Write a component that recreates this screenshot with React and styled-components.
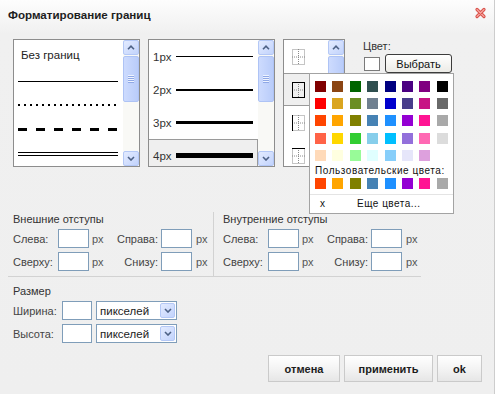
import React from "react"
import styled, { createGlobalStyle } from "styled-components"

const GlobalStyle = createGlobalStyle`
  html, body {
    margin: 0;
    padding: 0;
    background: #fff;
  }
  body {
    font-family: "Liberation Sans", Arial, sans-serif;
    font-size: 11px;
  }
`

const palette = [
  ["#800000", "#8b4513", "#006400", "#2f4f4f", "#000080", "#4b0082", "#800080", "#000000"],
  ["#ff0000", "#daa520", "#6b8e23", "#708090", "#0000cd", "#483d8b", "#c71585", "#696969"],
  ["#ff4500", "#ffa500", "#808000", "#4682b4", "#1e90ff", "#9400d3", "#ff1493", "#a9a9a9"],
  ["#ff6347", "#ffd700", "#32cd32", "#87ceeb", "#00bfff", "#9370db", "#ff69b4", "#dcdcdc"],
  ["#ffdab9", "#ffffe0", "#98fb98", "#e0ffff", "#87cefa", "#e6e6fa", "#dda0dd", "#ffffff"],
]
const customColors = palette[2]

const Dialog = styled.div`
  position: relative;
  width: 495px;
  height: 394px;
  box-sizing: border-box;
  border-right: 1px solid #cdcdcd;
  background: linear-gradient(#fdfdfd 0, #f0f0f0 34px, #efefef 100%);
  color: #3a3a3a;
  display: flex;
  flex-direction: column;
`

const TitleBar = styled.div`
  height: 28px;
  padding: 0 7px 0 8px;
  display: flex;
  align-items: center;
  justify-content: space-between;
`

const Title = styled.div`
  font-weight: bold;
  font-size: 11.6px;
  color: #1e1e1e;
  margin-top: 1px;
`

const CloseButton = styled.div`
  width: 13px;
  height: 12px;
  margin-top: -2px;
  display: flex;
`

const TopRow = styled.div`
  display: flex;
  align-items: flex-start;
  padding: 11px 0 0 13px;
`

const ListBox = styled.div`
  width: ${p => p.$width}px;
  height: 128px;
  box-sizing: border-box;
  border: 1px solid #8d8d8d;
  background: #fff;
  display: flex;
  & + & {
    margin-left: 8px;
  }
`

const ListContent = styled.div`
  flex: 1;
  overflow: hidden;
  display: flex;
  flex-direction: column;
`

const Scrollbar = styled.div`
  width: 16px;
  background: #f9f9f6;
  display: flex;
  flex-direction: column;
`

const ScrollButton = styled.div`
  height: 15px;
  box-sizing: border-box;
  border: 1px solid #b4c8f6;
  border-radius: 2px;
  background: linear-gradient(135deg, #e3ebff, #c2d3fc);
  display: flex;
  align-items: center;
  justify-content: center;
`

const Track = styled.div`
  flex: 1;
`

const Thumb = styled.div`
  margin-top: 1px;
  height: 46px;
  box-sizing: border-box;
  border: 1px solid #aec3f5;
  border-radius: 2px;
  background: linear-gradient(90deg, #cddbfe, #b9ccfa);
  display: flex;
  align-items: center;
  justify-content: center;
`

const Grip = styled.div`
  width: 6px;
  height: 8px;
  background: repeating-linear-gradient(#eef3ff 0 1px, #8fa8e6 1px 2px);
`

const TextItem = styled.div`
  height: 30px;
  padding-left: 7px;
  display: flex;
  align-items: center;
  color: #222;
  font-size: 11.5px;
`

const LineItem = styled.div`
  height: 25px;
  padding: 0 5px 0 4px;
  display: flex;
  align-items: center;
`

const Solid = styled.div`
  flex: 1;
  height: 1px;
  background: #000;
`

const Dotted = styled.div`
  flex: 1;
  height: 2px;
  background: repeating-linear-gradient(90deg, #000 0 2px, transparent 2px 6px);
`

const Dashed = styled.div`
  flex: 1;
  height: 3px;
  background: repeating-linear-gradient(90deg, #000 0 9px, transparent 9px 18px);
`

const Double = styled.div`
  flex: 1;
  height: 4px;
  box-sizing: border-box;
  border-top: 1px solid #000;
  border-bottom: 1px solid #000;
`

const Row = styled.div`
  height: 33px;
  flex-shrink: 0;
  box-sizing: border-box;
  display: flex;
  align-items: center;
  padding-left: ${p => p.$pad}px;
  background: ${p => (p.$selected ? "#efefef" : "transparent")};
  border-top: 1px solid ${p => (p.$selected ? "#9a9a9a" : "transparent")};
  border-bottom: 1px solid ${p => (p.$selected ? "#9a9a9a" : "transparent")};
  border-right: 1px solid ${p => (p.$selected ? "#9a9a9a" : "transparent")};
`

const WidthLabel = styled.span`
  color: #333;
  width: 23px;
  font-size: 11.5px;
`

const WidthLine = styled.div`
  flex: 1;
  margin-right: 4px;
  background: #000;
`

const ColorColumn = styled.div`
  margin-left: 18px;
  padding-top: 1px;
`

const ColorLabel = styled.div`
  color: #333;
  line-height: 13px;
`

const ColorRow = styled.div`
  display: flex;
  align-items: center;
  margin-top: 1px;
`

const ColorSwatch = styled.div`
  width: 16px;
  height: 14px;
  margin-left: 1px;
  box-sizing: border-box;
  border: 1px solid #7a7a7a;
  background: #fff;
`

const PickButton = styled.div`
  margin-left: 5px;
  width: 67px;
  height: 19px;
  box-sizing: border-box;
  border: 1px solid #3c3c3c;
  border-radius: 3px;
  background: linear-gradient(#ffffff, #ecebe6);
  display: flex;
  align-items: center;
  justify-content: center;
  color: #111;
`

const Popup = styled.div`
  position: absolute;
  left: 309px;
  top: 73px;
  width: 145px;
  height: 141px;
  box-sizing: border-box;
  border: 1px solid #a3a3a3;
  background: #fff;
  padding: 7px 0 0 5px;
`

const SwatchGrid = styled.div`
  display: grid;
  grid-template-columns: repeat(8, 11px);
  grid-auto-rows: 11px;
  column-gap: 6.4px;
  row-gap: 6.2px;
`

const Swatch = styled.div`
  background: ${p => p.$color};
`

const PopupLabel = styled.div`
  margin-top: 4px;
  height: 12px;
  line-height: 12px;
  font-size: 10px;
  letter-spacing: 0.55px;
  color: #111;
`

const CustomGrid = styled(SwatchGrid)`
  margin-top: 1px;
`

const PopupFooter = styled.div`
  margin: 5px 0 0 -5px;
  border-top: 1px solid #e4e4e4;
  height: 18px;
  display: flex;
  align-items: center;
  font-size: 10px;
  letter-spacing: 0.5px;
  color: #111;
`

const Cross = styled.span`
  width: 47px;
  padding-left: 10px;
  box-sizing: border-box;
`

const Margins = styled.div`
  display: flex;
  margin: 45px 0 0 8px;
  width: 413px;
  border-bottom: 1px solid #d2d2d2;
`

const Group = styled.div`
  padding: 0 0 5px ${p => p.$pad}px;
  width: ${p => p.$width}px;
  box-sizing: border-box;
  border-right: ${p => (p.$divider ? "1px solid #d2d2d2" : "none")};
`

const GroupTitle = styled.div`
  height: 12px;
  line-height: 12px;
  margin: 1px 0 4px;
  color: #333;
`

const FieldGrid = styled.div`
  display: grid;
  grid-template-columns: 45px 31px 27px 45px 31px auto;
  grid-auto-rows: 19px;
  row-gap: 4px;
  align-items: center;
`

const Label = styled.span`
  color: #444;
  text-align: ${p => (p.$right ? "right" : "left")};
  padding-right: ${p => (p.$right ? 3 : 0)}px;
`

const Input = styled.div`
  width: ${p => p.$width || 31}px;
  height: 19px;
  box-sizing: border-box;
  border: 1px solid #7f9db9;
  background: #fff;
`

const Unit = styled.span`
  color: #555;
  padding-left: ${p => p.$pad}px;
`

const SizeSection = styled.div`
  padding: 7px 0 0 13px;
`

const SizeGrid = styled.div`
  display: grid;
  grid-template-columns: 49px 30px 81px;
  grid-auto-rows: 19px;
  column-gap: 0;
  row-gap: 4px;
  align-items: center;
  & > :nth-child(3n) {
    margin-left: 4px;
    width: 81px;
  }
`

const Select = styled.div`
  height: 19px;
  box-sizing: border-box;
  border: 1px solid #7f9db9;
  background: #fff;
  display: flex;
  align-items: center;
  justify-content: space-between;
  padding: 1px 1px 1px 3px;
  color: #222;
  font-size: 11.5px;
`

const SelectArrow = styled.div`
  width: 15px;
  height: 15px;
  box-sizing: border-box;
  border: 1px solid #b4c8f6;
  border-radius: 2px;
  background: linear-gradient(135deg, #e3ebff, #c2d3fc);
  display: flex;
  align-items: center;
  justify-content: center;
`

const Footer = styled.div`
  margin-top: auto;
  display: flex;
  justify-content: flex-end;
  gap: 2px;
  padding: 0 12px 12px 0;
`

const Button = styled.div`
  width: ${p => p.$width}px;
  height: 27px;
  box-sizing: border-box;
  border: 1px solid #cacaca;
  background: linear-gradient(#ffffff, #f1f1f1 60%, #e6e6e6);
  display: flex;
  align-items: center;
  justify-content: center;
  font-weight: bold;
  color: #1c1c1c;
  & + & {
    margin-left: ${p => p.$gap || 0}px;
  }
`

const Chevron = ({ up }) => (
  <svg width="8" height="5" viewBox="0 0 8 5">
    <path
      d={up ? "M1 4.2 L4 1.2 L7 4.2" : "M1 1 L4 4 L7 1"}
      fill="none"
      stroke="#4d6185"
      strokeWidth="1.6"
    />
  </svg>
)

const ScrollBar = () => (
  <Scrollbar>
    <ScrollButton>
      <Chevron up />
    </ScrollButton>
    <Track>
      <Thumb>
        <Grip />
      </Thumb>
    </Track>
    <ScrollButton>
      <Chevron />
    </ScrollButton>
  </Scrollbar>
)

const BorderIcon = ({ solid }) => (
  <svg width="13" height="16" viewBox="0 0 13 16">
    <g fill="none" stroke="#8a8a8a" strokeWidth="1" strokeDasharray="1 1">
      <rect x="0.5" y="0.5" width="12" height="15" />
      <line x1="6.5" y1="0" x2="6.5" y2="16" />
      <line x1="0" y1="8" x2="13" y2="8" />
    </g>
    <g fill="none" stroke="#000" strokeWidth="1">
      {solid === "all" && <rect x="0.5" y="0.5" width="12" height="15" />}
      {solid === "left" && <line x1="0.5" y1="0" x2="0.5" y2="16" />}
      {solid === "top" && <line x1="0" y1="0.5" x2="13" y2="0.5" />}
    </g>
  </svg>
)

const CloseIcon = () => (
  <svg width="13" height="12" viewBox="0 0 13 12">
    <path d="M3 2.5 L10 9.5 M10 2.5 L3 9.5" stroke="#d9534c" strokeWidth="3.2" strokeLinecap="round" />
    <path d="M3 2.5 L10 9.5 M10 2.5 L3 9.5" stroke="#f7a7a1" strokeWidth="1.1" strokeLinecap="round" />
  </svg>
)

const widths = [1, 2, 3, 4]
const borders = ["none", "all", "left", "top"]

const MarginGroup = ({ title }) => (
  <>
    <GroupTitle>{title}</GroupTitle>
    <FieldGrid>
      <Label>Слева:</Label>
      <Input />
      <Unit $pad={3}>px</Unit>
      <Label $right>Справа:</Label>
      <Input />
      <Unit $pad={4}>px</Unit>
      <Label>Сверху:</Label>
      <Input />
      <Unit $pad={3}>px</Unit>
      <Label $right>Снизу:</Label>
      <Input />
      <Unit $pad={4}>px</Unit>
    </FieldGrid>
  </>
)

export default function App() {
  return (
    <>
      <GlobalStyle />
      <Dialog>
        <TitleBar>
          <Title>Форматирование границ</Title>
          <CloseButton>
            <CloseIcon />
          </CloseButton>
        </TitleBar>

        <TopRow>
          <ListBox $width={127}>
            <ListContent>
              <TextItem>Без границ</TextItem>
              <LineItem>
                <Solid />
              </LineItem>
              <LineItem>
                <Dotted />
              </LineItem>
              <LineItem>
                <Dashed />
              </LineItem>
              <LineItem>
                <Double />
              </LineItem>
            </ListContent>
            <ScrollBar />
          </ListBox>

          <ListBox $width={127}>
            <ListContent>
              {widths.map(w => (
                <Row key={w} $pad={4} $selected={w === 4}>
                  <WidthLabel>{w}px</WidthLabel>
                  <WidthLine style={{ height: w === 4 ? 5 : w }} />
                </Row>
              ))}
            </ListContent>
            <ScrollBar />
          </ListBox>

          <ListBox $width={62}>
            <ListContent>
              {borders.map(b => (
                <Row key={b} $pad={8} $selected={b === "all"}>
                  <BorderIcon solid={b} />
                </Row>
              ))}
            </ListContent>
            <ScrollBar />
          </ListBox>

          <ColorColumn>
            <ColorLabel>Цвет:</ColorLabel>
            <ColorRow>
              <ColorSwatch />
              <PickButton>Выбрать</PickButton>
            </ColorRow>
          </ColorColumn>
        </TopRow>

        <Margins>
          <Group $pad={5} $width={206} $divider>
            <MarginGroup title="Внешние отступы" />
          </Group>
          <Group $pad={9} $width={207}>
            <MarginGroup title="Внутренние отступы" />
          </Group>
        </Margins>

        <SizeSection>
          <GroupTitle>Размер</GroupTitle>
          <SizeGrid>
            <Label>Ширина:</Label>
            <Input $width={30} />
            <Select>
              пикселей
              <SelectArrow>
                <Chevron />
              </SelectArrow>
            </Select>
            <Label>Высота:</Label>
            <Input $width={30} />
            <Select>
              пикселей
              <SelectArrow>
                <Chevron />
              </SelectArrow>
            </Select>
          </SizeGrid>
        </SizeSection>

        <Footer>
          <Button $width={72}>отмена</Button>
          <Button $width={89}>применить</Button>
          <Button $width={45} $gap={2}>ok</Button>
        </Footer>

        <Popup>
          <SwatchGrid>
            {palette.flat().map((c, i) => (
              <Swatch key={i} $color={c} />
            ))}
          </SwatchGrid>
          <PopupLabel>Пользовательские цвета:</PopupLabel>
          <CustomGrid>
            {customColors.map((c, i) => (
              <Swatch key={i} $color={c} />
            ))}
          </CustomGrid>
          <PopupFooter>
            <Cross>x</Cross>
            <span>Еще цвета...</span>
          </PopupFooter>
        </Popup>
      </Dialog>
    </>
  )
}
